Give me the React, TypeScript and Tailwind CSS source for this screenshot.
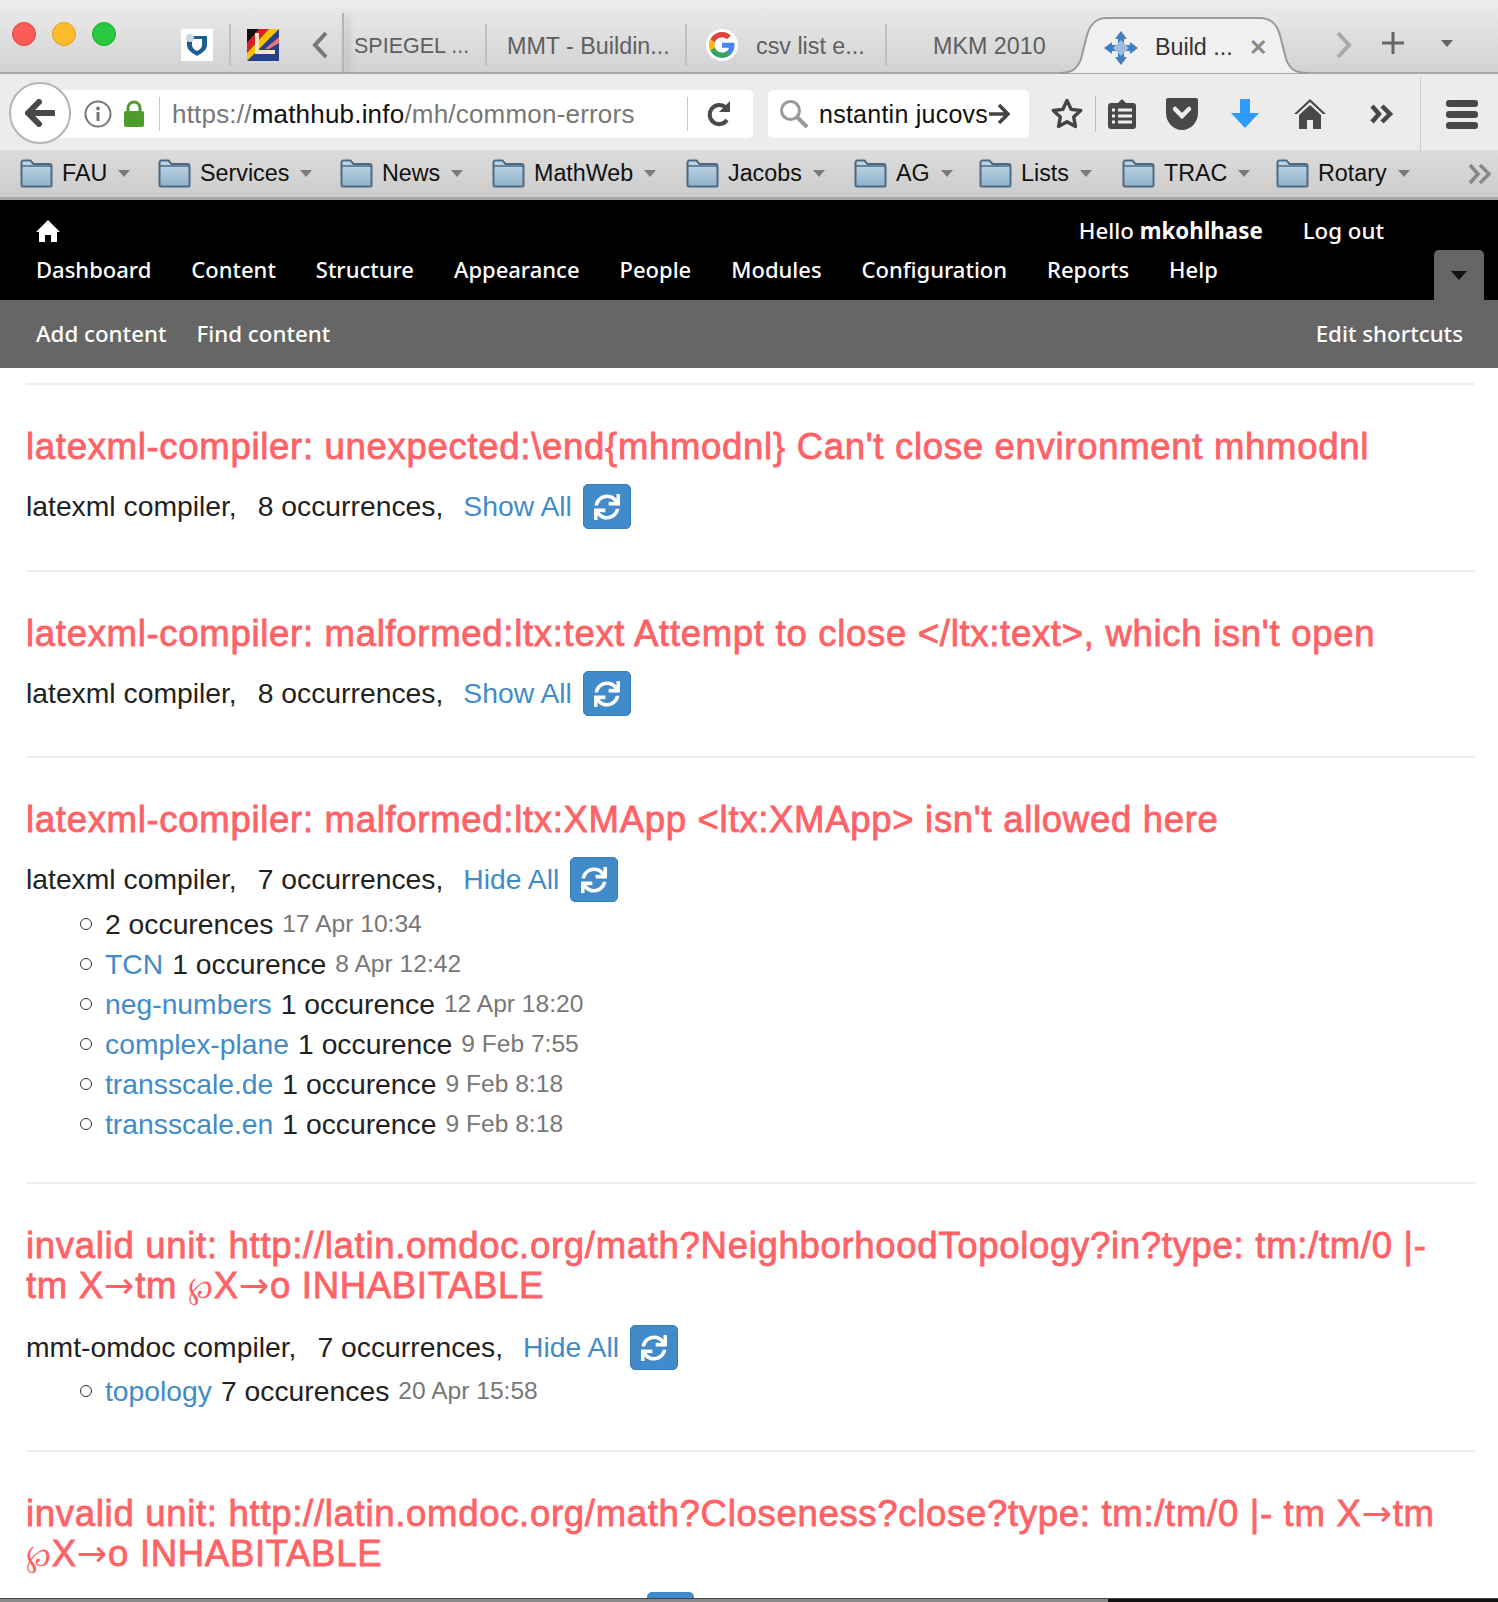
import React from 'react';
import { FaSync } from 'react-icons/fa';

const sans = { fontFamily: '"Liberation Sans", Arial, sans-serif' };

function Folder() {
  return (
    <svg width="33" height="29" viewBox="0 0 33 29" className="shrink-0">
      <defs>
        <linearGradient id="fold" x1="0" y1="0" x2="0" y2="1">
          <stop offset="0" stopColor="#c5d8e6" />
          <stop offset="1" stopColor="#8fb3cd" />
        </linearGradient>
      </defs>
      <path d="M1.5 26V3.500a2 2 0 0 1 2-2h7l3 3.500h16a2 2 0 0 1 2 2V26a1.500 1.500 0 0 1-1.500 1.500H3A1.500 1.500 0 0 1 1.500 26z" fill="url(#fold)" stroke="#4c6a84" strokeWidth="2" />
      <path d="M2 7h29" stroke="#4c6a84" strokeWidth="1.500" />
    </svg>
  );
}

function Caret({ color = '#7b7b7b' }: { color?: string }) {
  return (
    <svg width="12" height="7" viewBox="0 0 12 7" className="shrink-0">
      <path d="M0 0h12L6 7z" fill={color} />
    </svg>
  );
}

function Bookmark({ label, width }: { label: string; width: string }) {
  return (
    <div className={`flex items-center ${width}`}>
      <Folder />
      <span className="ml-[9px] mr-[11px] text-[23.300px] leading-none text-[#111]">{label}</span>
      <Caret />
    </div>
  );
}

function SyncButton() {
  return (
    <span className="ml-[11px] inline-flex h-[45px] w-[48px] items-center justify-center rounded-[5px] border border-[#3a7ab5] bg-[#428bca]">
      <FaSync className="h-[26px] w-[26px] text-white" />
    </span>
  );
}

function Occurrence({ link, text, date }: { link?: string; text: string; date: string }) {
  return (
    <li className="flex h-[40px] items-center">
      <span className="ml-[54px] mr-[13px] h-[12px] w-[12px] rounded-full border border-[#333] bg-white" />
      {link && <span className="mr-[9px] text-[#428bca]">{link}</span>}
      <span>{text}</span>
      <span className="ml-[9px] text-[24.600px] text-[#777]">{date}</span>
    </li>
  );
}

function Arrow() {
  return <span className="font-['DejaVu_Sans',sans-serif] [-webkit-text-stroke:0]">→</span>;
}

function Power() {
  return <span className="text-[30px] [-webkit-text-stroke:0]">℘</span>;
}

function ErrorEntry({
  title,
  compiler,
  count,
  action,
  children,
  height,
}: {
  title: React.ReactNode;
  compiler: string;
  count: string;
  action: string;
  children?: React.ReactNode;
  height: string;
}) {
  return (
    <section className={`border-b-2 border-[#eeeeee] pt-[42px] ${height}`}>
      <h2 className="text-[36.500px] leading-[40px] tracking-[0.7px] text-[#ff6266] [-webkit-text-stroke:0.8px_#ff6266]">{title}</h2>
      <div className="mt-[17px] flex h-[45px] items-center text-[28.300px] text-[#222]">
        <span>{compiler},</span>
        <span className="ml-[21px]">{count},</span>
        <span className="ml-[20px] text-[#428bca]">{action}</span>
        <SyncButton />
      </div>
      {children}
    </section>
  );
}

export default function App() {
  return (
    <div className="relative flex h-[1602px] w-[1498px] flex-col overflow-hidden bg-white" style={sans}>
      {/* browser tabs */}
      <div className="relative flex h-[74px] shrink-0 items-center border-b-2 border-[#a8a8a8] bg-gradient-to-b from-[#ececec] to-[#d2d2d2] pt-[18px] text-[23.300px] text-[#5f5f5f]">
        <div className="ml-[12px] flex gap-[16px] self-start pt-[4px]">
          <span className="h-[24px] w-[24px] rounded-full border border-[#e0443e] bg-[#fc5b57]" />
          <span className="h-[24px] w-[24px] rounded-full border border-[#dea123] bg-[#fdbc2e]" />
          <span className="h-[24px] w-[24px] rounded-full border border-[#1aab29] bg-[#28c940]" />
        </div>
        <div className="ml-[65px] flex h-[32px] w-[32px] items-center justify-center bg-white">
          <svg width="26" height="24" viewBox="0 0 26 24">
            <path d="M3 3h20v9c0 5-5 8-10 11C8 20 3 17 3 12z" fill="#1d5f8e" />
            <path d="M8 6h10v6c0 3-3 5-5 6-2-1-5-3-5-6z" fill="#fff" />
            <circle cx="6" cy="5" r="4" fill="#c9d8e6" />
          </svg>
        </div>
        <div className="ml-[16px] h-[42px] w-[2px] bg-[#c0c0c0]" />
        <svg width="32" height="32" viewBox="0 0 32 32" className="ml-[16px]">
          <rect width="32" height="32" fill="#27408b" />
          <path d="M0 0h12L0 14z" fill="#111" />
          <path d="M12 0h10L0 24V14z" fill="#d81f26" />
          <path d="M22 0h10L0 32v-8z" fill="#f6c400" />
          <path d="M32 8v6l-10 6h-4z" fill="#e9767a" />
          <path d="M8 4h4v17h16v4H8z" fill="#f3e6c4" />
        </svg>
        <svg width="18" height="30" viewBox="0 0 18 30" className="ml-[32px]">
          <path d="M15 3L4 15l11 12" fill="none" stroke="#777" strokeWidth="4" />
        </svg>
        <div className="ml-[13px] h-[59px] w-[2px] self-end bg-[#b5b5b5] shadow-[4px_0_6px_rgba(0,0,0,0.25)]" />
        <div className="flex h-[42px] w-[143px] items-center border-r-2 border-[#c0c0c0] pl-[10px] pt-[3px] text-[21.500px]">SPIEGEL ...</div>
        <div className="flex h-[42px] w-[200px] items-center border-r-2 border-[#c0c0c0] pl-[20px] pt-[3px]">MMT - Buildin...</div>
        <div className="flex h-[42px] w-[200px] items-center border-r-2 border-[#c0c0c0] pl-[19px]">
          <span className="mr-[18px] flex h-[32px] w-[32px] items-center justify-center rounded-full bg-white">
            <svg width="26" height="26" viewBox="0 0 24 24">
              <path d="M12 10v4.500h6.400c-.6 3-3.100 4.700-6.400 4.700A7.200 7.200 0 0 1 12 4.800c1.800 0 3.400.6 4.700 1.700l3.300-3.300A11.800 11.800 0 0 0 12 .2a11.800 11.800 0 0 0 0 23.600c6.800 0 11.500-4.800 11.500-11.500 0-.8-.1-1.600-.2-2.300z" fill="#4285f4" />
              <path d="M1.400 6.800l3.900 2.900A7.200 7.200 0 0 1 12 4.800c1.800 0 3.400.6 4.700 1.700l3.300-3.300A11.800 11.800 0 0 0 1.400 6.800z" fill="#ea4335" />
              <path d="M1.400 6.800a11.800 11.800 0 0 0 0 10.400l3.900-3a7.200 7.200 0 0 1 0-4.500z" fill="#fbbc05" />
              <path d="M1.400 17.200A11.800 11.800 0 0 0 20 20.500l-3.700-2.700a7.200 7.200 0 0 1-11-3.600z" fill="#34a853" />
            </svg>
          </span>
          <span className="pt-[3px]">csv list e...</span>
        </div>
        <div className="flex h-[42px] w-[172px] items-center pl-[46px] pt-[3px]">MKM 2010</div>
        <div className="relative -mb-[2px] flex h-[57px] w-[249px] items-center self-end pt-[4px]">
          <svg width="249" height="57" viewBox="0 0 249 57" className="absolute left-0 top-0">
            <path d="M0 56c12 0 18-3 22-14l5-20C30 8 36 1 48 1h153c12 0 18 7 21 21l5 20c4 11 10 14 22 14" fill="#f0f0f0" stroke="#999" strokeWidth="2" />
          </svg>
          <svg width="34" height="34" viewBox="0 0 34 34" className="relative ml-[45px]">
            <path d="M17 0l6 8h-3v4h-6V8h-3zM17 34l-6-8h3v-4h6v4h3zM0 17l8-6v3h4v6H8v3zM34 17l-8 6v-3h-4v-6h4v-3z" fill="#3f7fc1" />
            <path d="M17 9l8 8-8 8-8-8z" fill="#9dbde0" />
          </svg>
          <span className="relative ml-[17px] text-[#333]">Build ...</span>
          <span className="relative ml-[16px] text-[22px] font-bold leading-none text-[#8a8a8a]">✕</span>
        </div>
        <svg width="18" height="30" viewBox="0 0 18 30" className="ml-[27px]">
          <path d="M3 3l11 12L3 27" fill="none" stroke="#aaa" strokeWidth="4" />
        </svg>
        <svg width="22" height="22" viewBox="0 0 22 22" className="ml-[29px] -mt-[4px]">
          <path d="M11 0v22M0 11h22" stroke="#666" strokeWidth="3" />
        </svg>
        <div className="ml-[37px] -mt-[4px]">
          <Caret color="#666" />
        </div>
      </div>

      {/* url bar */}
      <div className="relative flex h-[76px] shrink-0 items-center bg-[#ececec] pt-[4px]">
        <div className="absolute left-[9px] top-[8px] z-10 flex h-[62px] w-[62px] items-center justify-center rounded-full border-2 border-[#b4b4b4] bg-white">
          <svg width="30" height="28" viewBox="0 0 30 28">
            <path d="M14 3L3 14l11 11M4 14h24" fill="none" stroke="#484848" strokeWidth="6" strokeLinecap="round" strokeLinejoin="round" />
          </svg>
        </div>
        <div className="ml-[40px] flex h-[48px] w-[713px] items-center rounded-[5px] bg-white">
          <svg width="28" height="28" viewBox="0 0 28 28" className="ml-[44px]">
            <circle cx="14" cy="14" r="12.500" fill="none" stroke="#777" strokeWidth="2" />
            <circle cx="14" cy="8.500" r="2" fill="#777" />
            <path d="M14 12v9" stroke="#777" strokeWidth="3" />
          </svg>
          <svg width="22" height="28" viewBox="0 0 22 28" className="ml-[11px]">
            <rect x="1" y="11" width="20" height="16" rx="2" fill="#4f9a2c" />
            <path d="M5 12V8a6 6 0 0 1 12 0v4" fill="none" stroke="#4f9a2c" strokeWidth="3" />
          </svg>
          <div className="ml-[14px] h-[34px] w-[1px] bg-[#c9c9c9]" />
          <div className="ml-[12px] whitespace-nowrap pt-[1px] text-[26px] tracking-[0.2px] text-[#777]">
            https://<span className="text-[#111]">mathhub.info</span>/mh/common-errors
          </div>
          <div className="ml-auto flex items-center">
            <div className="h-[34px] w-[1px] bg-[#c9c9c9]" />
            <svg width="26" height="28" viewBox="0 0 26 28" className="ml-[18px] mr-[21px]">
              <path d="M21 20a9.500 9.500 0 1 1-1-12" fill="none" stroke="#4a4a4a" strokeWidth="4" />
              <path d="M24 1v11H13z" fill="#4a4a4a" />
            </svg>
          </div>
        </div>
        <div className="ml-[15px] flex h-[48px] w-[261px] items-center rounded-[5px] bg-white">
          <svg width="30" height="30" viewBox="0 0 30 30" className="ml-[11px]">
            <circle cx="11.500" cy="11.500" r="9" fill="none" stroke="#999" strokeWidth="3" />
            <path d="M18 18l10 10" stroke="#999" strokeWidth="4" />
          </svg>
          <div className="ml-[10px] w-[169px] whitespace-nowrap pt-[1px] text-[25px] tracking-[0.25px] text-[#111]">nstantin jucovs</div>
          <svg width="22" height="24" viewBox="0 0 22 24">
            <path d="M1 12h18M11 3l9 9-9 9" fill="none" stroke="#444" strokeWidth="3.500" />
          </svg>
        </div>
        <svg width="34" height="34" viewBox="0 0 24 24" className="ml-[21px]">
          <path d="M12 2.500l2.900 6.200 6.800.8-5 4.600 1.300 6.700-6-3.400-6 3.400 1.300-6.700-5-4.600 6.800-.8z" fill="none" stroke="#444" strokeWidth="2.400" strokeLinejoin="round" />
        </svg>
        <div className="ml-[11px] h-[36px] w-[1px] bg-[#bcbcbc]" />
        <svg width="30" height="32" viewBox="0 0 30 32" className="ml-[11px]">
          <rect x="1" y="5" width="28" height="26" rx="3" fill="#484848" />
          <path d="M10 6l5-5 5 5z" fill="#484848" />
          <path d="M5 12h3M11 12h14M5 18h3M11 18h14M5 24h3M11 24h14" stroke="#eee" strokeWidth="3" />
        </svg>
        <svg width="34" height="34" viewBox="0 0 34 34" className="ml-[28px]">
          <path d="M1 3a2 2 0 0 1 2-2h28a2 2 0 0 1 2 2v13c0 9-7 17-16 17S1 25 1 16z" fill="#484848" />
          <path d="M10 12l7 7 7-7" fill="none" stroke="#eee" strokeWidth="4.500" strokeLinecap="round" />
        </svg>
        <svg width="30" height="30" viewBox="0 0 30 30" className="ml-[31px]">
          <path d="M10 0h10v14h9L15 29 1 14h9z" fill="#2f9bff" />
        </svg>
        <svg width="32" height="30" viewBox="0 0 32 30" className="ml-[34px]">
          <path d="M16 0L0 15h3L16 3l13 12h3z" fill="#484848" />
          <path d="M16 6L5 16v14h8v-9h6v9h8V16z" fill="#484848" />
        </svg>
        <svg width="24" height="20" viewBox="0 0 24 20" className="ml-[44px]">
          <path d="M2 2l7 8-7 8M12 2l8 8-8 8" fill="none" stroke="#484848" strokeWidth="4.500" />
        </svg>
        <div className="ml-[26px] h-[76px] w-[1px] bg-[#cfcfcf]" />
        <div className="ml-[25px] flex flex-col gap-[4px]">
          <span className="h-[7px] w-[32px] rounded-[3px] bg-[#484848]" />
          <span className="h-[7px] w-[32px] rounded-[3px] bg-[#484848]" />
          <span className="h-[7px] w-[32px] rounded-[3px] bg-[#484848]" />
        </div>
      </div>

      {/* bookmarks */}
      <div className="flex h-[50px] shrink-0 items-center border-b-[3px] border-[#a8a8a8] bg-gradient-to-b from-[#dcdcdc] to-[#cccccc] pl-[20px]">
        <Bookmark label="FAU" width="w-[138px]" />
        <Bookmark label="Services" width="w-[182px]" />
        <Bookmark label="News" width="w-[152px]" />
        <Bookmark label="MathWeb" width="w-[194px]" />
        <Bookmark label="Jacobs" width="w-[168px]" />
        <Bookmark label="AG" width="w-[125px]" />
        <Bookmark label="Lists" width="w-[143px]" />
        <Bookmark label="TRAC" width="w-[154px]" />
        <Bookmark label="Rotary" width="w-[192px]" />
        <svg width="26" height="22" viewBox="0 0 26 22">
          <path d="M2 2l8 9-8 9M12 2l9 9-9 9" fill="none" stroke="#888" strokeWidth="3.500" />
        </svg>
      </div>

      {/* drupal admin toolbar */}
      <div className="relative flex h-[100px] shrink-0 flex-col bg-black px-[36px] font-['Noto_Sans',sans-serif] text-[22px] font-medium text-white">
        <div className="flex h-[60px] items-center justify-between pt-[2px]">
          <svg width="24" height="24" viewBox="0 0 24 24">
            <path d="M12 1L0 13h3v10h6v-7h6v7h6V13h3z" fill="#fff" />
          </svg>
          <div className="mr-[78px] flex gap-[40px] text-[22.300px]">
            <span>
              Hello <b>mkohlhase</b>
            </span>
            <span>Log out</span>
          </div>
        </div>
        <div className="-mt-[7px] flex gap-[40px]">
          <span>Dashboard</span>
          <span>Content</span>
          <span>Structure</span>
          <span>Appearance</span>
          <span>People</span>
          <span>Modules</span>
          <span>Configuration</span>
          <span>Reports</span>
          <span>Help</span>
        </div>
        <div className="absolute bottom-0 right-[14px] flex h-[50px] w-[50px] items-center justify-center rounded-t-[5px] bg-[#666]">
          <svg width="16" height="9" viewBox="0 0 16 9">
            <path d="M0 0h16L8 9z" fill="#111" />
          </svg>
        </div>
      </div>
      <div className="flex h-[68px] shrink-0 items-center gap-[30px] bg-[#666] px-[36px] font-['Noto_Sans',sans-serif] text-[22.300px] font-medium text-white">
        <span>Add content</span>
        <span>Find content</span>
        <span className="ml-auto mr-[-1px]">Edit shortcuts</span>
      </div>

      {/* error list */}
      <main className="ml-[26px] mr-[23px] mt-[15px] border-t-2 border-[#eeeeee]">
        <ErrorEntry
          title="latexml-compiler: unexpected:\end{mhmodnl} Can't close environment mhmodnl"
          compiler="latexml compiler"
          count="8 occurrences"
          action="Show All"
          height="h-[187px]"
        />
        <ErrorEntry
          title="latexml-compiler: malformed:ltx:text Attempt to close </ltx:text>, which isn't open"
          compiler="latexml compiler"
          count="8 occurrences"
          action="Show All"
          height="h-[186px]"
        />
        <ErrorEntry
          title="latexml-compiler: malformed:ltx:XMApp <ltx:XMApp> isn't allowed here"
          compiler="latexml compiler"
          count="7 occurrences"
          action="Hide All"
          height="h-[426px]"
        >
          <ul className="mt-[2px] text-[28.300px] text-[#222]">
            <Occurrence text="2 occurences" date="17 Apr 10:34" />
            <Occurrence link="TCN" text="1 occurence" date="8 Apr 12:42" />
            <Occurrence link="neg-numbers" text="1 occurence" date="12 Apr 18:20" />
            <Occurrence link="complex-plane" text="1 occurence" date="9 Feb 7:55" />
            <Occurrence link="transscale.de" text="1 occurence" date="9 Feb 8:18" />
            <Occurrence link="transscale.en" text="1 occurence" date="9 Feb 8:18" />
          </ul>
        </ErrorEntry>
        <ErrorEntry
          title={
            <>
              invalid unit: http://latin.omdoc.org/math?NeighborhoodTopology?in?type: tm:/tm/0 |-
              <br />
              tm X<Arrow />tm <Power />X<Arrow />o INHABITABLE
            </>
          }
          compiler="mmt-omdoc compiler"
          count="7 occurrences"
          action="Hide All"
          height="h-[268px]"
        >
          <ul className="mt-[1px] text-[28.300px] text-[#222]">
            <Occurrence link="topology" text="7 occurences" date="20 Apr 15:58" />
          </ul>
        </ErrorEntry>
        <section className="pt-[42px]">
          <h2 className="text-[36.500px] leading-[40px] tracking-[0.7px] text-[#ff6266] [-webkit-text-stroke:0.8px_#ff6266]">
            invalid unit: http://latin.omdoc.org/math?Closeness?close?type: tm:/tm/0 |- tm X<Arrow />tm
            <br />
            <Power />X<Arrow />o INHABITABLE
          </h2>
        </section>
      </main>

      {/* the window behind, at the very bottom edge */}
      <div className="absolute bottom-[4px] left-[647px] h-[6px] w-[47px] rounded-t-[5px] bg-[#428bca]" />
      <div className="absolute bottom-0 left-0 flex h-[4px] w-full border-t border-[#444] bg-[#8a8a8a]">
        <div className="ml-auto w-[390px] bg-[#111]" />
      </div>
    </div>
  );
}
